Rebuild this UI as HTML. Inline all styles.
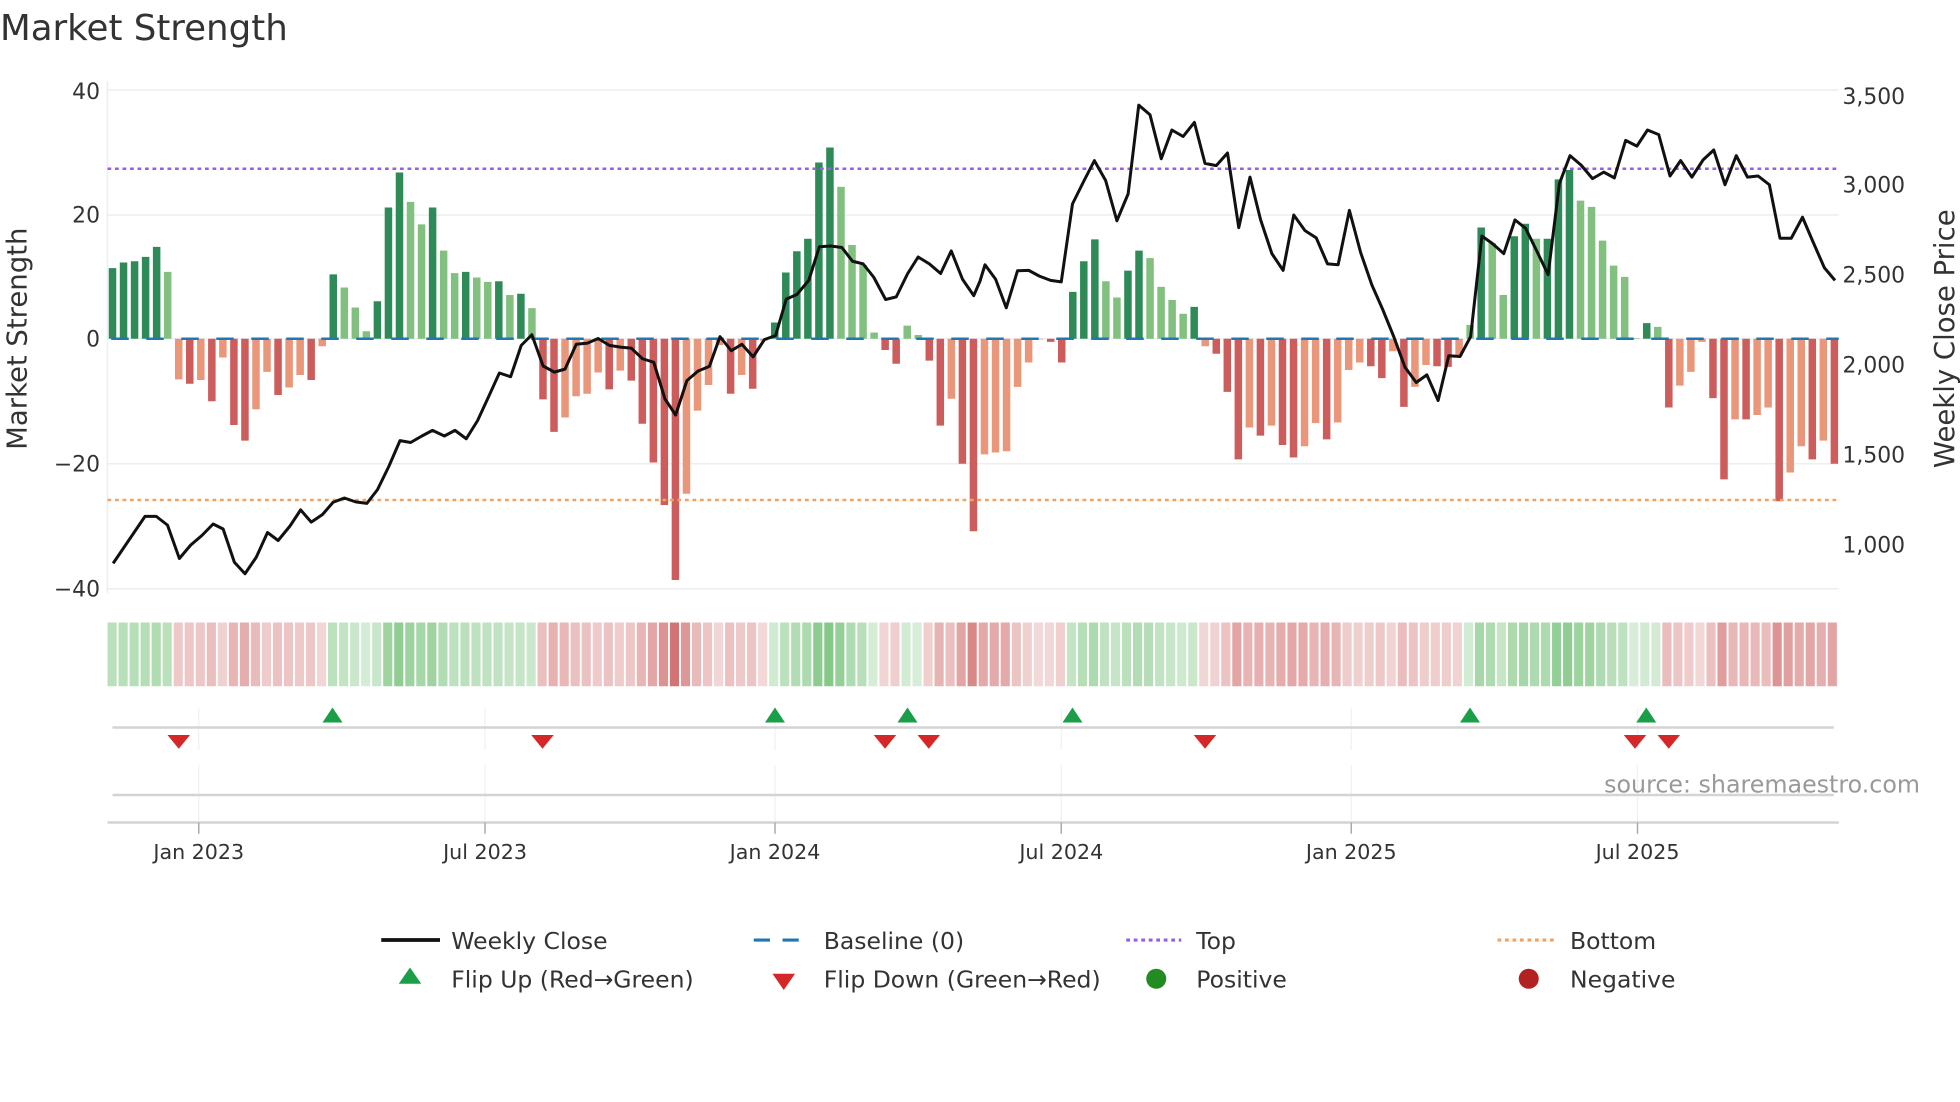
<!DOCTYPE html>
<html><head><meta charset="utf-8"><style>
html,body{margin:0;padding:0;background:#fff;}
svg{display:block;font-family:"DejaVu Sans","Liberation Sans",sans-serif;}
</style></head><body>
<svg id="s" width="1960" height="1102" viewBox="0 0 1568 881.6" preserveAspectRatio="none" xmlns="http://www.w3.org/2000/svg">
<text x="0" y="32" font-size="28.5" fill="#333">Market Strength</text>
<g stroke="#eceff1" stroke-width="1.2">
<line x1="86" y1="72" x2="1471" y2="72"/><line x1="86" y1="172" x2="1471" y2="172"/>
<line x1="86" y1="271" x2="1471" y2="271"/><line x1="86" y1="371" x2="1471" y2="371"/>
<line x1="86" y1="471" x2="1471" y2="471"/><line x1="86" y1="65" x2="86" y2="475"/>
</g>
<g font-size="17.5" fill="#333" text-anchor="end">
<text x="80" y="79">40</text><text x="80" y="178">20</text><text x="80" y="277">0</text>
<text x="80" y="377">−20</text><text x="80" y="477">−40</text>
</g>
<g font-size="17.5" fill="#333">
<text x="1474" y="83">3,500</text><text x="1474" y="154">3,000</text><text x="1474" y="226">2,500</text>
<text x="1474" y="298">2,000</text><text x="1474" y="370">1,500</text><text x="1474" y="442">1,000</text>
</g>
<text transform="translate(21,271) rotate(-90)" font-size="22" fill="#333" text-anchor="middle">Market Strength</text>
<text transform="translate(1563,271) rotate(-90)" font-size="22" fill="#333" text-anchor="middle">Weekly Close Price</text>
<g id="bars"></g>
<line x1="86" y1="135" x2="1471" y2="135" stroke="#9b5de5" stroke-width="2" stroke-dasharray="3,3"/>
<line x1="86" y1="400" x2="1471" y2="400" stroke="#f4a261" stroke-width="2" stroke-dasharray="3,3"/>
<line x1="86" y1="271" x2="1471" y2="271" stroke="#1f77b4" stroke-width="2" stroke-dasharray="14,14" stroke-dashoffset="-3"/>
<polyline id="pl" fill="none" stroke="#111" stroke-width="2.4" stroke-linejoin="round"/>
<g id="heat"></g>
<g stroke="#eef2f4" stroke-width="1">
<line x1="159" y1="566" x2="159" y2="600"/><line x1="388" y1="566" x2="388" y2="600"/><line x1="620" y1="566" x2="620" y2="600"/>
<line x1="849" y1="566" x2="849" y2="600"/><line x1="1081" y1="566" x2="1081" y2="600"/><line x1="1310" y1="566" x2="1310" y2="600"/>
<line x1="159" y1="612" x2="159" y2="658"/><line x1="388" y1="612" x2="388" y2="658"/><line x1="620" y1="612" x2="620" y2="658"/>
<line x1="849" y1="612" x2="849" y2="658"/><line x1="1081" y1="612" x2="1081" y2="658"/><line x1="1310" y1="612" x2="1310" y2="658"/>
</g>
<line x1="90" y1="582" x2="1467" y2="582" stroke="#d4d4d4" stroke-width="2"/>
<line x1="90" y1="636" x2="1467" y2="636" stroke="#d4d4d4" stroke-width="2"/>
<line x1="86" y1="658" x2="1471" y2="658" stroke="#d4d4d4" stroke-width="2"/>
<g stroke="#aaa" stroke-width="1.2">
<line x1="159" y1="658" x2="159" y2="667"/><line x1="388" y1="658" x2="388" y2="667"/><line x1="620" y1="658" x2="620" y2="667"/>
<line x1="849" y1="658" x2="849" y2="667"/><line x1="1081" y1="658" x2="1081" y2="667"/><line x1="1310" y1="658" x2="1310" y2="667"/>
</g>
<g id="flips"></g>
<text x="1536" y="634" font-size="19" fill="#999" text-anchor="end">source: sharemaestro.com</text>
<g font-size="16.5" fill="#333" text-anchor="middle">
<text x="159" y="687">Jan 2023</text><text x="388" y="687">Jul 2023</text><text x="620" y="687">Jan 2024</text>
<text x="849" y="687">Jul 2024</text><text x="1081" y="687">Jan 2025</text><text x="1310" y="687">Jul 2025</text>
</g>
<g font-size="18.8" fill="#333">
<line x1="305" y1="752" x2="352" y2="752" stroke="#111" stroke-width="3"/><text x="361" y="759">Weekly Close</text>
<line x1="603" y1="752" x2="647" y2="752" stroke="#1f77b4" stroke-width="2.5" stroke-dasharray="13,10"/><text x="659" y="759">Baseline (0)</text>
<line x1="901" y1="752" x2="945" y2="752" stroke="#9b5de5" stroke-width="2.5" stroke-dasharray="3,3"/><text x="957" y="759">Top</text>
<line x1="1198" y1="752" x2="1243" y2="752" stroke="#f4a261" stroke-width="2.5" stroke-dasharray="3,3"/><text x="1256" y="759">Bottom</text>
<polygon points="328,774 337,787 319,787" fill="#1a9e48"/><text x="361" y="790">Flip Up (Red→Green)</text>
<polygon points="618,779 636,779 627,792" fill="#d62728"/><text x="659" y="790">Flip Down (Green→Red)</text>
<circle cx="925" cy="783" r="8" fill="#228b22"/><text x="957" y="790">Positive</text>
<circle cx="1223" cy="783" r="8" fill="#b22222"/><text x="1256" y="790">Negative</text>
</g>
</svg>
<script>
var V=[11.3,12.2,12.4,13.1,14.7,10.7,-6.5,-7.2,-6.6,-10,-3,-13.8,-16.3,-11.3,-5.3,-9,-7.8,-5.8,-6.6,-1.2,10.3,8.2,5,1.2,6,21,26.6,21.9,18.3,21,14.1,10.5,10.7,9.8,9.1,9.2,7,7.2,4.9,-9.7,-14.9,-12.6,-9.2,-8.8,-5.4,-8.1,-5.1,-6.7,-13.6,-19.8,-26.6,-38.6,-24.8,-11.5,-7.4,-1,-8.8,-5.8,-8,-0.3,2.6,10.6,14,16,28.2,30.6,24.3,15,11.8,1,-1.8,-4,2.1,0.6,-3.5,-13.9,-9.6,-20,-30.8,-18.5,-18.2,-18,-7.7,-3.8,-0.1,-0.5,-3.8,7.5,12.4,15.9,9.2,6.6,10.9,14.1,12.9,8.3,6.2,4,5.1,-1.2,-2.4,-8.5,-19.3,-14.2,-15.5,-13.9,-17,-19,-17.2,-13.5,-16.1,-13.4,-5,-3.8,-4.4,-6.3,-2,-10.9,-7.7,-4.2,-4.4,-4.5,-2.7,2.2,17.8,15.3,7,16.4,18.4,16,16,25.5,27,22.1,21.1,15.7,11.7,9.9,0.1,2.5,1.9,-11,-7.5,-5.3,-0.5,-9.5,-22.5,-12.9,-12.9,-12.2,-11,-26,-21.4,-17.2,-19.3,-16.3,-20];
var NS="http://www.w3.org/2000/svg";
function el(t,a,p){var e=document.createElementNS(NS,t);for(var k in a)e.setAttribute(k,a[k]);p.appendChild(e);return e;}
var bars=document.getElementById('bars'),heat=document.getElementById('heat');
var n=V.length,dx=(1467.5-90)/(n-1);
for(var i=0;i<n;i++){var v=V[i],x=90+i*dx,prev=i>0?V[i-1]:v;
 var strong=Math.abs(v)>=Math.abs(prev)||i==0;
 var c=v>=0?(strong?'#2e8b57':'#81c07f'):(strong?'#cd5c5c':'#e9967a');
 var y0=271,y1=271-v*5;
 el('rect',{x:x-3,y:Math.min(y0,y1),width:6,height:Math.max(0.5,Math.abs(y1-y0)),fill:c},bars);
 var a=Math.min(1,0.22+Math.abs(v)/40*0.6);
 var base=v>=0?[76,175,80]:[200,80,80];
 var col='rgb('+base.map(function(b){return Math.round(255-(255-b)*a)}).join(',')+')';
 var hx=86+i*(1385/n);
 el('rect',{x:hx,y:498,width:1385/n-1.5,height:51,fill:col},heat);
}
var Z1=[[181,1473],[232,1350],[250,1350],[268,1373],[287,1460],[305,1425],[323,1400],[341,1370],[357,1383],[375,1470],[392,1500],[410,1457],[428,1392],[445,1413],[464,1375],[481,1333],[498,1365],[516,1345],[533,1313],[551,1302],[569,1312],[587,1316],[604,1280],[622,1220],[640,1152],[657,1157],[675,1140],[692,1125],[711,1140],[728,1125],[746,1147],[764,1100],[781,1040],[799,975],[817,985],[834,903],[851,875],[869,957],[887,973],[904,965],[922,900],[940,897],[957,885],[975,903],[994,908],[1010,910],[1028,938],[1046,947],[1064,1043],[1081,1085],[1099,995],[1117,970],[1135,958],[1152,880],[1170,917],[1187,900],[1205,933],[1223,888],[1241,877],[1258,782],[1275,770],[1294,733],[1311,645],[1329,643],[1347,647],[1364,683],[1381,690],[1398,725],[1417,783],[1434,776],[1452,716],[1469,672],[1487,690],[1505,715],[1522,656],[1540,730],[1558,773]];
var Z2=[[0,735],[8,692],[25,730],[42,805],[60,708],[78,707],[95,722],[113,733],[130,737],[148,533],[166,474],[183,420],[201,472],[219,577],[237,507],[254,275],[272,300],[290,415],[307,340],[325,357],[343,320],[360,427],[378,433],[396,400],[414,595],[432,463],[449,575],[467,663],[485,707],[502,562],[520,603],[538,622],[556,690],[573,692],[591,550],[609,660],[627,745],[644,808],[662,880],[680,960],[698,1000],[715,980],[733,1047],[750,930],[768,932],[785,880],[803,617],[820,637],[838,663],[856,575],[873,597],[891,657],[909,718],[927,480],[944,407],[962,432],[980,467],[998,450],[1015,465],[1033,367],[1051,382],[1068,340],[1086,352],[1104,460],[1121,420],[1139,463],[1157,418],[1174,392],[1192,483],[1210,407],[1228,463],[1245,460],[1263,483],[1280,623],[1298,623],[1316,568],[1333,633],[1351,700],[1368,733]];
var pts=Z1.map(function(p){return (p[0]*0.5).toFixed(1)+','+(p[1]*0.306).toFixed(1)}).concat(Z2.map(function(p){return (784+p[0]*0.5).toFixed(1)+','+(p[1]*0.306).toFixed(1)}));
document.getElementById('pl').setAttribute('points',pts.join(' '));
var fl=document.getElementById('flips');
[266,620,726,858,1176,1317].forEach(function(x){el('polygon',{points:x+',566 '+(x+8)+',578 '+(x-8)+',578',fill:'#1a9e48'},fl);});
[143,434,708,743,964,1308,1335].forEach(function(x){el('polygon',{points:(x-9)+',588 '+(x+9)+',588 '+x+',599',fill:'#d62728'},fl);});
</script>
</body></html>
